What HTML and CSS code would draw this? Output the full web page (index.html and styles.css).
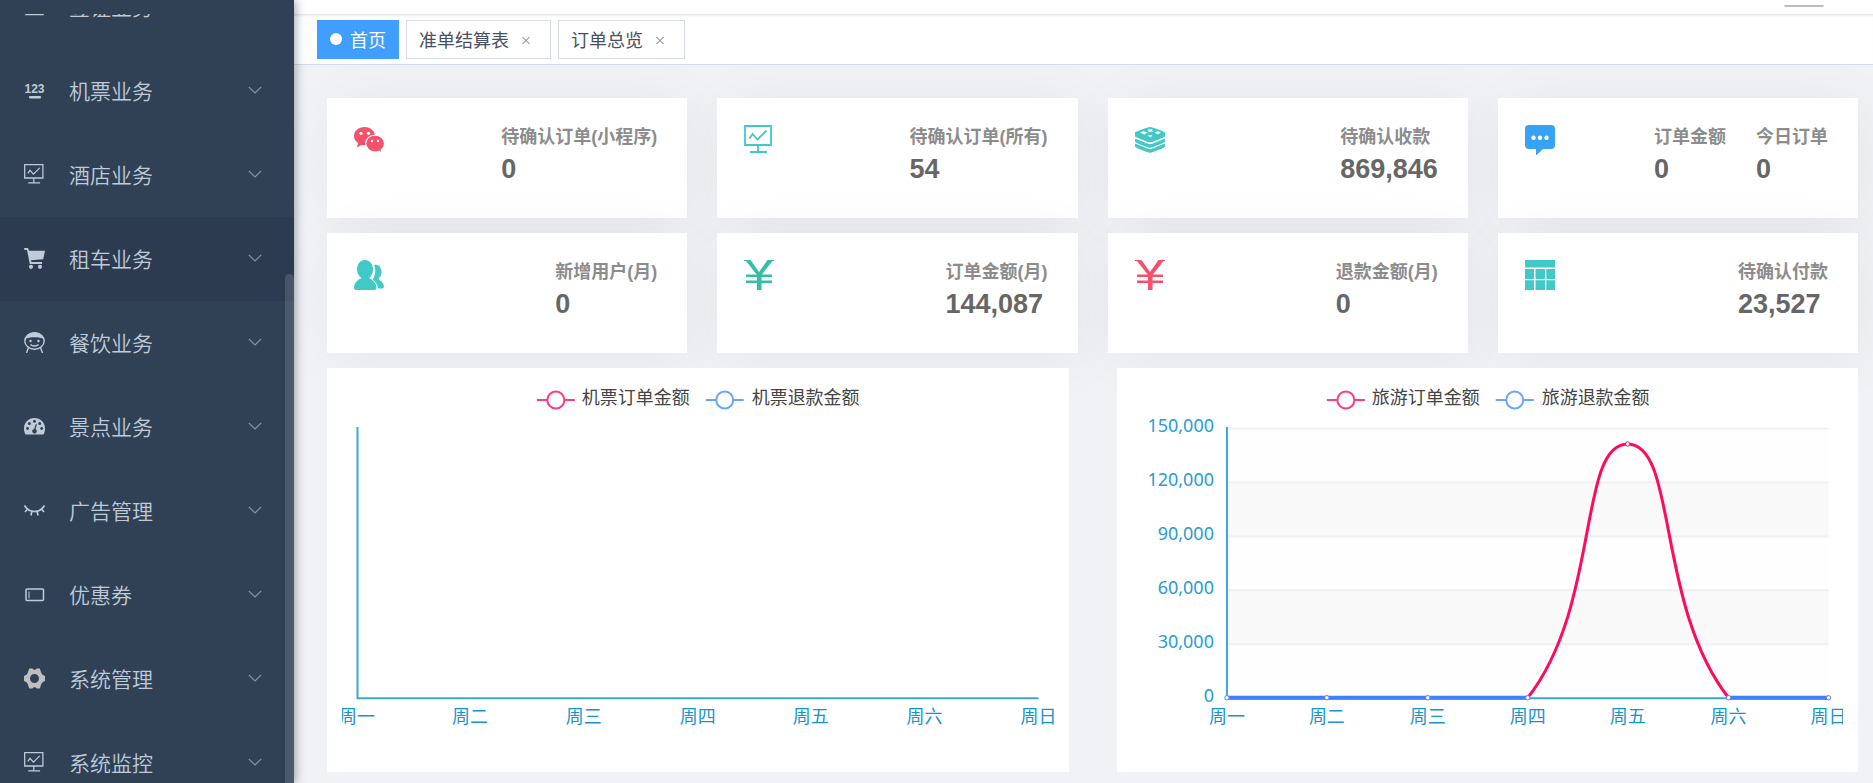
FILE: index.html
```html
<!DOCTYPE html>
<html lang="zh-CN">
<head>
<meta charset="utf-8">
<title>首页</title>
<link rel="stylesheet" href="styles.css">
</head>
<body>
<svg class="sprite" aria-hidden="true">
  <symbol id="i-chart" viewBox="0 0 30 30"><g fill="none" stroke="currentColor" stroke-width="1.8"><path d="M1 1h26v19H1zM14 20v7M6 27h17"/><path d="M5.500 13.500l3-4.500 5 5.500 9-9"/></g></symbol>
  <symbol id="i-123" viewBox="0 0 21 21"><text x="10.500" y="13" text-anchor="middle" class="digits" fill="currentColor">123</text><rect x="5" y="16" width="12" height="2.500" rx="1" fill="currentColor"/></symbol>
  <symbol id="i-doc" viewBox="0 0 21 21"><path d="M2 3h17v15.500H2z" fill="none" stroke="currentColor" stroke-width="1.500"/></symbol>
  <symbol id="i-cart" viewBox="0 0 21 21"><g fill="currentColor"><path d="M0 0h4l1 2.700h16l-1.800 8.500L7 12.200l.4 1.800H18v2H5.800L3 2H.5z"/><circle cx="7" cy="18.800" r="2.100"/><circle cx="16" cy="18.800" r="2.100"/></g></symbol>
  <symbol id="i-face" viewBox="0 0 21 21"><g fill="none" stroke="currentColor" stroke-width="1.400"><ellipse cx="10.500" cy="9" rx="9.700" ry="8.200"/><path d="M6.500 12.500c1.500 2 6.500 2 8 0M4.500 15.500L2.500 21M16.500 15.500l2 5.500"/></g><path d="M1 7C2 2.500 6 .5 10.500 .5S19 2.500 20 7C16 4.800 5 4.800 1 7z" fill="currentColor"/><circle cx="6.500" cy="9" r="1.200" fill="currentColor"/><circle cx="14.500" cy="9" r="1.200" fill="currentColor"/></symbol>
  <symbol id="i-dash" viewBox="0 0 21 21"><path d="M1.500 18.500C.6 17 0 14.800 0 12.500 0 6.500 4.700 2 10.500 2S21 6.500 21 12.500c0 2.300-.6 4.500-1.500 6z" fill="currentColor"/><g fill="#304156"><circle cx="3.500" cy="12.500" r="1.400"/><circle cx="5.300" cy="7.500" r="1.500"/><circle cx="10.500" cy="5.200" r="1.500"/><circle cx="15.700" cy="7.500" r="1.500"/><circle cx="17.700" cy="12.500" r="1.400"/><path d="M11.800 8l1 .3-1.100 4.900a2.300 2.300 0 1 1-1.500-.3z"/></g></symbol>
  <symbol id="i-eye" viewBox="0 0 21 21"><path d="M.5 5.500C5 13.500 16 13.500 20.500 5.500M3.500 9L1 12M7.800 11.500L7 15.500M13.200 11.500l.8 4M17.500 9l2.500 3" fill="none" stroke="currentColor" stroke-width="1.600"/></symbol>
  <symbol id="i-ticket" viewBox="0 0 21 21"><g fill="none" stroke="currentColor" stroke-width="1.500"><rect x="2" y="5" width="17.500" height="11.500" rx="1"/><path d="M5 7.500v7" stroke-width="1"/></g></symbol>
  <symbol id="i-gear" viewBox="0 0 21 21"><path fill-rule="evenodd" fill="#bfbfbf" d="M5.200 .5h3l1.500 1.300h1.600L12.800 .5h3l1.500 4.600 1.200 1.700L21 8v5l-2.500 1.200-1.200 1.700-1.500 4.600h-3l-1.500-1.300H9.700l-1.500 1.300h-3l-1.500-4.600-1.200-1.700L0 13V8l2.500-1.200 1.200-1.700zM10.500 6a4.500 4.500 0 1 0 0 9 4.500 4.500 0 0 0 0-9z"/></symbol>
  <symbol id="i-down" viewBox="0 0 14 14"><path d="M.8 3.800L7 10l6.200-6.200" fill="none" stroke="currentColor" stroke-width="1.200"/></symbol>
  <symbol id="i-wechat" viewBox="0 0 30 30"><g fill="currentColor"><path d="M10.500 2C4.700 2 0 6 0 11c0 3 1.500 5.300 4 7l-1 4.500 4.500-2.500c1 .3 2 .3 3 .3 6 0 10.500-4.300 10.500-9.300S16.300 2 10.500 2z"/><path stroke="#fff" stroke-width="1.200" d="M21 10.200c-5.300 0-9.300 3.800-9.300 8.300s4 8.500 9.300 8.500c1.400 0 2.800-.2 4-.7l3 2.200-.8-3.600c2-1.500 3.300-3.800 3.300-6.400 0-4.500-4.200-8.300-9.500-8.300z"/></g><g fill="#fff"><circle cx="7" cy="8.300" r="1.600"/><circle cx="14.500" cy="8.300" r="1.600"/><circle cx="18" cy="16" r="1.200"/><circle cx="24" cy="16" r="1.200"/></g></symbol>
  <symbol id="i-layers" viewBox="0 0 30 30"><g fill="currentColor"><path d="M0 7.500C0 6.800 13 2 15 2s15 4.800 15 5.500v4C30 12.500 17 17.500 15 17.500S0 12.500 0 11.500z"/><path d="M0 13.400l13 5.300c1.500.6 2.500.6 4 0l13-5.300v3.100C30 17.600 17 22.700 15 22.700S0 17.600 0 16.500z"/><path d="M0 18.500l13 5.300c1.500.6 2.500.6 4 0l13-5.300v3.100C30 22.700 17 27.900 15 27.900S0 22.700 0 21.600z"/></g><path fill="none" stroke="#fff" stroke-width="1.200" d="M0 12.600l13 5.300c1.500.6 2.500.6 4 0l13-5.300"/><path fill="#fff" d="M5 7.800l3-1.600 4.500 1-3 2.300zM13 4l2 .5 2.500-.5-.5 1.500 1.500 1-2.700.2-2.300.8V6zM19.500 7.500l3.500-1.200 3 1.400-3.500 1.500zM12 10.500l5.500-.7-1.500 2.700z"/></symbol>
  <symbol id="i-msg" viewBox="0 0 30 30"><path fill="currentColor" d="M4 0h22a4 4 0 0 1 4 4v16a4 4 0 0 1-4 4h-8l-7 6.500V24H4a4 4 0 0 1-4-4V4a4 4 0 0 1 4-4z"/><g fill="#fff"><circle cx="8.500" cy="12.700" r="2.200"/><circle cx="15" cy="12.700" r="2.200"/><circle cx="21.500" cy="12.700" r="2.200"/></g></symbol>
  <symbol id="i-people" viewBox="0 0 30 30"><g fill="currentColor"><path d="M20 5c4-1.500 7.500 2 7.500 7 0 3-1 5-3 6.500 0 1.500 5.500 3.500 5.500 8 0 1-1 2-2 2h-4c-.5-5-3.500-7.500-5.500-9 2.500-3 4-9.500 1.500-14.500z"/><path d="M11 0c4.500 0 8 4 8 9.500 0 3.500-1.500 7-4 8.500 2 1.500 7.500 3.500 7.500 10 0 1-1 2-2 2H2c-1 0-2-1-2-2 0-6.500 5-8.500 7.500-10-2.500-1.500-4.500-5-4.500-8.500C3 4 6.500 0 11 0z"/></g></symbol>
  <symbol id="i-yen" viewBox="0 0 30 30"><path d="M0 0h6.500L15 12 23.500 0H30v1h-1.500L17.500 15v15h-4.500V15L2 1H0z" fill="currentColor"/><path d="M2 15.800h26M2 21.800h26" fill="none" stroke="currentColor" stroke-width="2.500"/></symbol>
  <symbol id="i-table" viewBox="0 0 30 30"><path fill="currentColor" d="M0 0h30v7.500H0zM0 9h9v10H0zM10.500 9h9.500v10h-9.500zM21.300 9H30v10h-8.700zM0 20.300h9V30H0zM10.500 20.300h9.500V30h-9.500zM21.300 20.300H30V30h-8.700z"/></symbol>
</svg>

<div class="app">
  <aside class="sidebar">
    <nav class="menu-wrap">
      <ul class="menu">
        <li><button class="item" type="button"><svg class="ico"><use href="#i-doc"/></svg><span>签证业务</span><svg class="arrow"><use href="#i-down"/></svg></button></li>
        <li><button class="item" type="button"><svg class="ico"><use href="#i-123"/></svg><span>机票业务</span><svg class="arrow"><use href="#i-down"/></svg></button></li>
        <li><button class="item" type="button"><svg class="ico"><use href="#i-chart"/></svg><span>酒店业务</span><svg class="arrow"><use href="#i-down"/></svg></button></li>
        <li><button class="item current" type="button"><svg class="ico"><use href="#i-cart"/></svg><span>租车业务</span><svg class="arrow"><use href="#i-down"/></svg></button></li>
        <li><button class="item" type="button"><svg class="ico"><use href="#i-face"/></svg><span>餐饮业务</span><svg class="arrow"><use href="#i-down"/></svg></button></li>
        <li><button class="item" type="button"><svg class="ico"><use href="#i-dash"/></svg><span>景点业务</span><svg class="arrow"><use href="#i-down"/></svg></button></li>
        <li><button class="item" type="button"><svg class="ico"><use href="#i-eye"/></svg><span>广告管理</span><svg class="arrow"><use href="#i-down"/></svg></button></li>
        <li><button class="item" type="button"><svg class="ico"><use href="#i-ticket"/></svg><span>优惠券</span><svg class="arrow"><use href="#i-down"/></svg></button></li>
        <li><button class="item" type="button"><svg class="ico"><use href="#i-gear"/></svg><span>系统管理</span><svg class="arrow"><use href="#i-down"/></svg></button></li>
        <li><button class="item" type="button"><svg class="ico"><use href="#i-chart"/></svg><span>系统监控</span><svg class="arrow"><use href="#i-down"/></svg></button></li>
      </ul>
    </nav>
    <div class="thumb"></div>
  </aside>

  <div class="main">
    <header class="navbar"><div class="avatar"></div></header>
    <nav class="tags">
      <a class="tag active" href="#"><i class="dot"></i>首页</a>
      <a class="tag" href="#">准单结算表<svg class="close" viewBox="0 0 24 24"><path d="M8.500 10l7 7M15.500 10l-7 7"/></svg></a>
      <a class="tag" href="#">订单总览<svg class="close" viewBox="0 0 24 24"><path d="M8.500 10l7 7M15.500 10l-7 7"/></svg></a>
    </nav>

    <main class="board">
      <section class="stats">
        <article class="card"><svg class="mark red"><use href="#i-wechat"/></svg><dl><dt>待确认订单(小程序)</dt><dd>0</dd></dl></article>
        <article class="card"><svg class="mark teal"><use href="#i-chart"/></svg><dl><dt>待确认订单(所有)</dt><dd>54</dd></dl></article>
        <article class="card"><svg class="mark teal"><use href="#i-layers"/></svg><dl><dt>待确认收款</dt><dd>869,846</dd></dl></article>
        <article class="card"><svg class="mark blue"><use href="#i-msg"/></svg><dl><dt>订单金额</dt><dd>0</dd></dl><dl><dt>今日订单</dt><dd>0</dd></dl></article>
        <article class="card"><svg class="mark teal"><use href="#i-people"/></svg><dl><dt>新增用户(月)</dt><dd>0</dd></dl></article>
        <article class="card"><svg class="mark green"><use href="#i-yen"/></svg><dl><dt>订单金额(月)</dt><dd>144,087</dd></dl></article>
        <article class="card"><svg class="mark red"><use href="#i-yen"/></svg><dl><dt>退款金额(月)</dt><dd>0</dd></dl></article>
        <article class="card"><svg class="mark teal"><use href="#i-table"/></svg><dl><dt>待确认付款</dt><dd>23,527</dd></dl></article>
      </section>

      <section class="charts">
        <figure class="panel">
          <svg class="chart" viewBox="0 0 712 374" role="img" aria-label="机票订单金额与退款金额">
            <g class="legend">
              <path class="s1" d="M195 17h38"/><circle class="s1" cx="214" cy="17" r="8.500"/><text x="240" y="21">机票订单金额</text>
              <path class="s2" d="M364 17h38"/><circle class="s2" cx="383" cy="17" r="8.500"/><text x="410" y="21">机票退款金额</text>
            </g>
            <path class="axis" d="M15.500 44v271.500H697"/>
            <g class="days">
              <text x="15" y="340">周一</text><text x="128" y="340">周二</text><text x="242" y="340">周三</text><text x="356" y="340">周四</text><text x="469" y="340">周五</text><text x="583" y="340">周六</text><text x="697" y="340">周日</text>
            </g>
          </svg>
        </figure>
        <figure class="panel">
          <svg class="chart" viewBox="0 0 712 374" role="img" aria-label="旅游订单金额与退款金额">
            <g class="legend">
              <path class="s1" d="M195 17h38"/><circle class="s1" cx="214" cy="17" r="8.500"/><text x="240" y="21">旅游订单金额</text>
              <path class="s2" d="M364 17h38"/><circle class="s2" cx="383" cy="17" r="8.500"/><text x="410" y="21">旅游退款金额</text>
            </g>
            <path class="band-a" d="M95 45h602v270H95z"/>
            <path class="band-b" d="M95 99h602v54H95zM95 207h602v54H95z"/>
            <path class="grid" d="M95 45.500h602M95 99.500h602M95 153.500h602M95 207.500h602M95 261.500h602"/>
            <path class="axis" d="M95 44v271.500H697"/>
            <g class="values">
              <text x="82" y="49">150,000</text><text x="82" y="103">120,000</text><text x="82" y="157">90,000</text><text x="82" y="211">60,000</text><text x="82" y="265">30,000</text><text x="82" y="319">0</text>
            </g>
            <g class="days">
              <text x="95" y="340">周一</text><text x="195" y="340">周二</text><text x="296" y="340">周三</text><text x="396" y="340">周四</text><text x="496" y="340">周五</text><text x="597" y="340">周六</text><text x="697" y="340">周日</text>
            </g>
            <path class="line1" d="M95 315H396C469 222 446 61 496 61S524 222 597 315H697"/>
            <path class="line2" d="M95 315H396M597 315H697"/>
            <circle class="dot1" cx="496" cy="61" r="2.200"/>
            <g class="dot2"><circle cx="95" cy="315" r="2.200"/><circle cx="195" cy="315" r="2.200"/><circle cx="296" cy="315" r="2.200"/><circle cx="396" cy="315" r="2.200"/><circle cx="597" cy="315" r="2.200"/><circle cx="697" cy="315" r="2.200"/></g>
          </svg>
        </figure>
      </section>
    </main>
  </div>
</div>
</body>
</html>
```

FILE: styles.css
```css
* { box-sizing: border-box; }

body {
  margin: 0;
  background: #f0f2f5;
  font-family: "Liberation Sans", "Noto Sans CJK SC", sans-serif;
  color: #495060;
}

.sprite { position: absolute; width: 0; height: 0; }

.app { display: flex; height: 100vh; overflow: hidden; }

/* sidebar */
.sidebar {
  position: relative;
  z-index: 2;
  flex: none;
  width: 294px;
  padding-top: 14px;
  background: #304156;
  box-shadow: 2px 0 9px rgba(0, 21, 41, .35);
}
.menu-wrap { height: 100%; overflow: hidden; }
.menu { margin: -49px 0 0; padding: 0; list-style: none; }
.item {
  display: flex;
  align-items: center;
  width: 100%;
  height: 84px;
  padding: 0 32px 2px 24px;
  border: 0;
  background: none;
  color: #bfcbd9;
  font: 21px "Noto Sans CJK SC", sans-serif;
  font-weight: 350;
  text-align: left;
}
.item.current { background: #2c3b50; }
.item span { flex: 1; }
.ico { width: 21px; height: 21px; margin-right: 24px; overflow: visible; }
.digits { font: bold 12px "Liberation Sans", sans-serif; }
.arrow { width: 14px; height: 14px; color: #909399; }
.thumb {
  position: absolute;
  top: 35%;
  right: 0;
  bottom: 0;
  width: 9px;
  border-radius: 5px 5px 0 0;
  background: rgba(144, 147, 153, .3);
}

/* header */
.main { flex: 1; min-width: 0; }
.navbar {
  display: flex;
  justify-content: flex-end;
  height: 14px;
  padding: 5px 49px 0 0;
  background: #fff;
}
.avatar { width: 40px; height: 2px; border-radius: 0 0 9px 9px; background: #bdbdbd; }
.tags {
  display: flex;
  gap: 7px;
  height: 51px;
  padding: 6px 23px 0;
  background: #fff;
  border-bottom: 1px solid #d3dae6;
  box-shadow: inset 0 3px 3px -2px rgba(0, 21, 41, .15);
}
.tag {
  display: flex;
  align-items: center;
  height: 39px;
  padding: 0 12px 2px;
  border: 1px solid #d8dce5;
  background: #fff;
  color: #495060;
  font-size: 18px;
  text-decoration: none;
}
.tag.active { border-color: #409eff; background: #409eff; color: #fff; }
.dot { width: 12px; height: 12px; margin-right: 8px; border-radius: 50%; background: #fff; }
.close { width: 24px; height: 24px; margin-left: 5px; fill: none; stroke: #6b7280; }

/* dashboard */
.board { padding: 33px 15px 0 33px; }
.stats { display: grid; grid-template-columns: repeat(4, 1fr); gap: 15px 30px; }
.card {
  display: flex;
  gap: 30px;
  height: 120px;
  padding: 27px 30px 0 27px;
  background: #fff;
  box-shadow: 6px 6px 60px rgba(0, 0, 0, .05);
}
.mark { width: 30px; height: 30px; margin-right: auto; overflow: visible; }
.red { color: #f4516c; }
.teal { color: #40c9c6; }
.green { color: #34bfa3; }
.blue { color: #36a3f7; }
.card dl { margin: 0; font-weight: bold; }
.card dt { color: #8c8c8c; font-size: 18px; line-height: 24px; }
.card dd { margin: 0; color: #666; font-size: 27px; line-height: 40px; }

.charts { display: grid; grid-template-columns: 1fr 1fr; gap: 48px; margin-top: 15px; }
.panel { position: relative; margin: 0; padding: 15px; background: #fff; }
.chart { display: block; width: 100%; font: 18px "Noto Sans", "Noto Sans CJK SC", sans-serif; }
.legend text { fill: #444; }
.legend .s1, .legend .s2 { fill: #fff; stroke-width: 2px; }
.legend .s1 { stroke: #ff3d7d; }
.legend .s2 { stroke: #68a5ff; }
.axis { fill: none; stroke: #3da5d9; stroke-width: 2px; }
.days text { fill: #1594d2; text-anchor: middle; }
.values text { fill: #2a9bd4; text-anchor: end; }
.band-a { fill: #fefefe; }
.band-b { fill: #f9f9f9; }
.grid { stroke: #f0f0f0; stroke-width: 2px; }
.line1, .line2 { fill: none; stroke-width: 3px; }
.line1 { stroke: #ff0a5e; }
.line2 { stroke: #3f80fb; stroke-width: 4px; }
.dot1 { fill: #fff; stroke: #ff1764; stroke-width: 1px; }
.dot2 circle { fill: #fff; stroke: #5a78e6; stroke-width: 1px; }
```
